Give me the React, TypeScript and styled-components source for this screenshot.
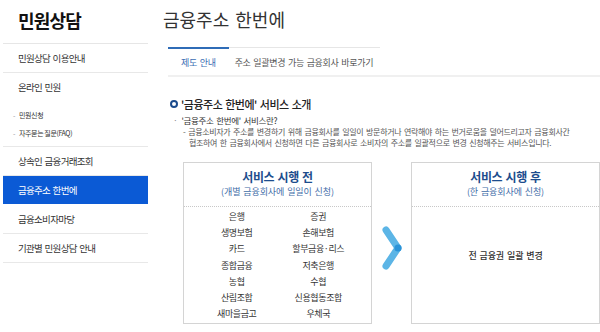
import React from 'react';
import styled, { createGlobalStyle } from 'styled-components';

const GlobalStyle = createGlobalStyle`
	html, body {
		margin: 0;
		padding: 0;
		background: #ffffff;
	}
	body {
		font-family: 'Noto Sans CJK KR', 'Noto Sans', sans-serif;
		color: #333333;
	}
	* {
		box-sizing: border-box;
	}
`;

const menu = [
	{ label: '민원상담 이용안내' },
	{ label: '온라인 민원', children: ['민원신청', '자주묻는 질문(FAQ)'] },
	{ label: '상속인 금융거래조회' },
	{ label: '금융주소 한번에', active: true },
	{ label: '금융소비자마당' },
	{ label: '기관별 민원상담 안내' },
];

const beforeItems = [
	['은행', '증권'],
	['생명보험', '손해보험'],
	['카드', '할부금융·리스'],
	['종합금융', '저축은행'],
	['농협', '수협'],
	['산림조합', '신용협동조합'],
	['새마을금고', '우체국'],
];

const Arrow = () => (
	<svg width="20" height="44" viewBox="0 0 20 44">
		<polyline
			points="4,4 16,22 4,40"
			fill="none"
			stroke="#5cb5e6"
			strokeWidth="7"
			strokeLinecap="round"
			strokeLinejoin="round"
		/>
		<circle cx="16" cy="22" r="3.6" fill="#2a93d8" />
	</svg>
);

const App = () => {
	return (
		<Page>
			<GlobalStyle />
			<Sidebar>
				<SideTitle>민원상담</SideTitle>
				{menu.map((item) => (
					<MenuGroup key={item.label} $divider={!item.active}>
						<MenuItem $active={item.active}>{item.label}</MenuItem>
						{item.children && (
							<SubList>
								{item.children.map((child) => (
									<SubItem key={child}>{child}</SubItem>
								))}
							</SubList>
						)}
					</MenuGroup>
				))}
			</Sidebar>

			<Main>
				<PageTitle>금융주소 한번에</PageTitle>
				<TabBar>
					<TabList>
						<Tab $active>제도 안내</Tab>
						<Tab>주소 일괄변경 가능 금융회사 바로가기</Tab>
					</TabList>
				</TabBar>

				<Section>
					<SectionTitle>
						<Ring />
						'금융주소 한번에' 서비스 소개
					</SectionTitle>
					<Bullet>'금융주소 한번에' 서비스란?</Bullet>
					<Desc>
						<DescLine>- 금융소비자가 주소를 변경하기 위해 금융회사를 일일이 방문하거나 연락해야 하는 번거로움을 덜어드리고자 금융회사간</DescLine>
						<DescLine $indent>협조하여 한 금융회사에서 신청하면 다른 금융회사로 소비자의 주소를 일괄적으로 변경 신청해주는 서비스입니다.</DescLine>
					</Desc>

					<Compare>
						<Box>
							<BoxHead>
								<BoxTitle>서비스 시행 전</BoxTitle>
								<BoxSub>(개별 금융회사에 일일이 신청)</BoxSub>
							</BoxHead>
							<ItemGrid>
								{beforeItems.flat().map((name) => (
									<Item key={name}>{name}</Item>
								))}
							</ItemGrid>
						</Box>
						<ArrowCell>
							<Arrow />
						</ArrowCell>
						<Box>
							<BoxHead>
								<BoxTitle>서비스 시행 후</BoxTitle>
								<BoxSub>(한 금융회사에 신청)</BoxSub>
							</BoxHead>
							<AfterBody>전 금융권 일괄 변경</AfterBody>
						</Box>
					</Compare>
				</Section>
			</Main>
		</Page>
	);
};

export default App;

const Page = styled.div`
	display: flex;
	width: 600px;
	height: 332px;
	overflow: hidden;
`;

const Sidebar = styled.nav`
	width: 148px;
	flex-shrink: 0;
	padding-left: 3px;
`;

const SideTitle = styled.h1`
	margin: 0;
	height: 44px;
	padding: 7px 0 0 15px;
	font-size: 18px;
	font-weight: 700;
	line-height: 26px;
	letter-spacing: -0.8px;
	color: #111111;
	border-bottom: 1px solid #e6e6e6;
`;

const MenuGroup = styled.div<{ $divider?: boolean }>`
	border-bottom: 1px solid ${({ $divider }) => ($divider ? '#e8e8e8' : 'transparent')};
`;

const MenuItem = styled.div<{ $active?: boolean }>`
	height: 28px;
	display: flex;
	align-items: center;
	padding-left: 15px;
	font-size: 9.5px;
	letter-spacing: -0.7px;
	word-spacing: 1px;
	color: ${({ $active }) => ($active ? '#ffffff' : '#333333')};
	background: ${({ $active }) => ($active ? '#0b5ad5' : 'transparent')};
`;

const SubList = styled.ul`
	list-style: none;
	margin: 0;
	padding: 5px 0 4px 10px;
`;

const SubItem = styled.li`
	height: 18px;
	line-height: 18px;
	font-size: 7px;
	letter-spacing: -0.4px;
	color: #333333;

	&::before {
		content: '-';
		color: #999999;
		margin-right: 4px;
	}
`;

const Main = styled.main`
	flex: 1;
	display: flex;
	flex-direction: column;
	padding-left: 15px;
	min-width: 0;
`;

const PageTitle = styled.h2`
	margin: 0;
	height: 47px;
	padding-top: 7px;
	font-size: 18px;
	font-weight: 400;
	line-height: 24px;
	letter-spacing: 0;
	word-spacing: 2px;
	color: #333333;
`;

const TabBar = styled.div`
	margin-left: 5px;
	border-bottom: 2px solid #f0f0f0;
`;

const TabList = styled.div`
	display: flex;
	width: 212px;
	border-top: 1px solid #e6e6e6;
`;

const Tab = styled.div<{ $active?: boolean }>`
	height: 28px;
	margin-top: -1px;
	display: flex;
	align-items: center;
	justify-content: center;
	padding: 0 ${({ $active }) => ($active ? '13px' : '6px')};
	font-size: 9px;
	letter-spacing: -0.3px;
	word-spacing: 1px;
	white-space: nowrap;
	color: ${({ $active }) => ($active ? '#3b6db3' : '#555555')};
	border-top: 2px solid ${({ $active }) => ($active ? '#2f6cb7' : 'transparent')};
`;

const Section = styled.section`
	padding: 19px 0 0 7px;
`;

const SectionTitle = styled.h3`
	display: flex;
	align-items: center;
	gap: 3px;
	margin: 0;
	height: 15px;
	font-size: 11px;
	font-weight: 500;
	letter-spacing: -0.5px;
	word-spacing: 1px;
	color: #222222;
`;

const Ring = styled.span`
	width: 8px;
	height: 8px;
	border: 2px solid #1b4b8c;
	border-radius: 50%;
`;

const Bullet = styled.p`
	margin: 4px 0 0 3px;
	font-size: 8.5px;
	line-height: 11px;
	letter-spacing: -0.3px;
	word-spacing: 1px;
	color: #333333;

	&::before {
		content: '·';
		color: #888888;
		margin-right: 4px;
	}
`;

const Desc = styled.div`
	margin: 0 0 0 13px;
`;

const DescLine = styled.div<{ $indent?: boolean }>`
	padding-left: ${({ $indent }) => ($indent ? '6px' : '0')};
	font-size: 8px;
	line-height: 11px;
	letter-spacing: -0.32px;
	word-spacing: 1.2px;
	white-space: nowrap;
	color: #555555;
`;

const Compare = styled.div`
	display: flex;
	margin: 14px 0 0 13px;
`;

const Box = styled.div`
	width: 189px;
	height: 162px;
	flex-shrink: 0;
	border: 1px solid #d4d4d4;
	display: flex;
	flex-direction: column;
`;

const BoxHead = styled.div`
	padding: 5px 0 8px;
	text-align: center;
	border-bottom: 1px dotted #c8c8c8;
`;

const BoxTitle = styled.div`
	font-size: 12px;
	font-weight: 700;
	line-height: 17px;
	letter-spacing: -0.4px;
	word-spacing: 1px;
	color: #1d4d8d;
`;

const BoxSub = styled.div`
	font-size: 9px;
	line-height: 13px;
	letter-spacing: -0.1px;
	word-spacing: 1px;
	color: #3f6da8;
`;

const ItemGrid = styled.div`
	display: grid;
	grid-template-columns: 1fr 1fr;
	padding: 2px 12px 0;
`;

const Item = styled.div`
	height: 16.2px;
	line-height: 16px;
	text-align: center;
	font-size: 9px;
	letter-spacing: -0.4px;
	color: #333333;
`;

const ArrowCell = styled.div`
	width: 40px;
	display: flex;
	justify-content: center;
	align-items: flex-start;
	padding-top: 64px;
`;

const AfterBody = styled.div`
	padding-top: 42px;
	text-align: center;
	font-size: 9px;
	font-weight: 500;
	letter-spacing: -0.1px;
	word-spacing: 1px;
	color: #333333;
`;
